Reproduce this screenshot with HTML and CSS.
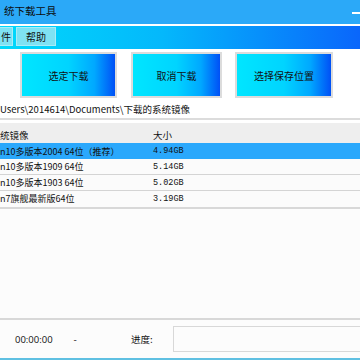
FILE: index.html
```html
<!DOCTYPE html>
<html>
<head>
<meta charset="utf-8">
<link rel="stylesheet" href="styles.css">
</head>
<body>
<div class="window">
  <div class="titlebar">
    <span class="title">统下载工具</span>
    <span class="min"></span>
  </div>
  <div class="menubar">
    <span class="menu-item first">件</span>
    <span class="menu-item">帮助</span>
  </div>
  <div class="actions">
    <div class="btn b1">选定下载</div>
    <div class="btn b2">取消下载</div>
    <div class="btn b3">选择保存位置</div>
  </div>
  <div class="path">Users\2014614\Documents\下载的系统镜像</div>
  <div class="list">
    <div class="row head"><span>统镜像</span><span>大小</span></div>
    <div class="row sel"><span>n10多版本2004 64位（推荐）</span><span class="size">4.94GB</span></div>
    <div class="row"><span>n10多版本1909 64位</span><span class="size">5.14GB</span></div>
    <div class="row"><span>n10多版本1903 64位</span><span class="size">5.02GB</span></div>
    <div class="row last"><span>n7旗舰最新版64位</span><span class="size">3.19GB</span></div>
  </div>
  <div class="empty"></div>
  <div class="status">
    <span class="time">00:00:00</span>
    <span class="dash">-</span>
    <span class="label">进度:</span>
    <div class="progress"></div>
  </div>
  <div class="bottom"></div>
</div>
</body>
</html>
```
FILE: styles.css
```css
* { box-sizing: border-box; }
html, body { margin: 0; padding: 0; }
body {
  width: 360px;
  height: 360px;
  overflow: hidden;
  background: #ffffff;
  font-family: "Noto Sans CJK SC", "Noto Sans", sans-serif;
  font-size: 10px;
  color: #111;
}
.window { width: 360px; display: flex; flex-direction: column; }
.titlebar {
  height: 26px;
  background: #2ba9f8;
  display: flex;
  align-items: center;
  border-bottom: 2px solid #ffffff;
}
.title { margin-left: 4px; font-size: 10.5px; line-height: 1; padding-bottom: 2px; color: #0c0c0c; }
.min { margin-left: auto; width: 8px; height: 2px; background: #ffffff; margin-top: 2px; }
.menubar {
  height: 23px;
  background: linear-gradient(to right, #00d9fb 0%, #04b8fb 45%, #0a66fb 100%);
  display: flex;
  gap: 3px;
  padding-top: 1px;
  align-items: flex-start;
}
.menu-item {
  width: 40px;
  height: 19px;
  background: #7fe2f3;
  border: 1px solid #a8ecf7;
  display: flex;
  align-items: center;
  justify-content: center;
  font-size: 10px;
  color: #111;
}
.menu-item.first { width: 13px; border-left: none; justify-content: flex-start; padding-left: 1px; }
.actions {
  display: flex;
  padding-left: 20px;
  margin-top: 3px;
  height: 46px;
}
.btn {
  height: 46px;
  border: 2px solid #dcdcdc;
  background: linear-gradient(to right, #00e6ff 0%, #00d4ff 50%, #00a8ff 78%, #0050f6 100%);
  display: flex;
  align-items: center;
  justify-content: center;
  font-size: 10px;
  color: #111;
}
.b1 { width: 97px; }
.b2 { width: 91px; margin-left: 14px; }
.b3 { width: 98px; margin-left: 13px; }
.path {
  height: 22px;
  display: flex;
  align-items: center;
  font-size: 9.5px;
  padding-top: 1px;
  border-bottom: 2px solid #dcdcdc;
  color: #111;
}
.list { margin-top: 3px; background: #fbfbfb; }
.row {
  display: grid;
  grid-template-columns: 153px 1fr;
  height: 16px;
  align-items: center;
  border-bottom: 1px solid #d4d4d4;
  font-size: 9px;
}
.row.head { height: 20px; background: #eeeeee; border-bottom: none; padding-top: 3px; font-size: 9.5px; }
.row.sel { background: #2aa8fc; border-bottom: none; }
.row.last { border-bottom: 2px solid #d8d8d8; height: 18px; padding-bottom: 1px; }
.size { font-family: "Liberation Mono", monospace; font-size: 8.5px; }
.empty { height: 111px; background: #fcfcfc; border-bottom: 2px solid #d8d8d8; }
.status {
  height: 38px;
  background: #fcfcfc;
  display: flex;
  align-items: flex-start;
  padding-top: 6px;
}
.status span { height: 26px; display: flex; align-items: center; font-size: 9.5px; }
.time { margin-left: 15px; font-family: "Open Sans", sans-serif; }
.dash { margin-left: 21px; }
.label { margin-left: 54px; }
.progress {
  margin-left: 20px;
  flex: 1;
  margin-right: -4px;
  height: 26px;
  border: 1px solid #d8d8d8;
  background: #fcfcfc;
}
.bottom { height: 2px; background: #5fc0e2; }
```
